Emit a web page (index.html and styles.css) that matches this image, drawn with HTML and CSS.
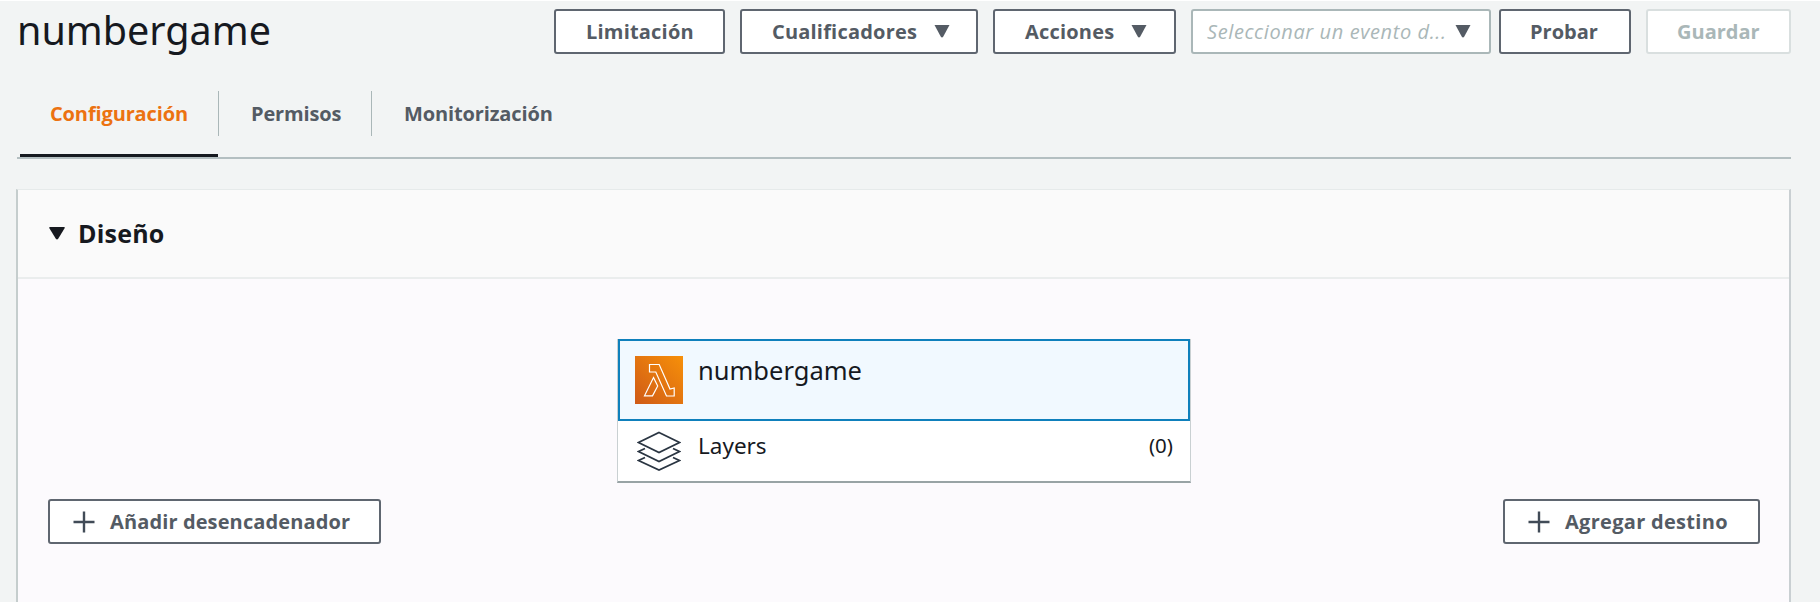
FILE: index.html
```
<!DOCTYPE html>
<html lang="es">
<head>
<meta charset="utf-8">
<title>numbergame</title>
<link rel="stylesheet" href="styles.css">
</head>
<body>
<div class="page">
  <header class="topbar">
    <h1 class="title">numbergame</h1>
    <div class="actions">
      <button class="btn throttle"><span>Limitación</span></button>
      <button class="btn qualifiers"><span>Cualificadores</span><svg class="caret" viewBox="0 0 16 13"><path d="M.5 0h15L9.300 11.500q-1.300 2-2.600 0z"/></svg></button>
      <button class="btn more"><span>Acciones</span><svg class="caret" viewBox="0 0 16 13"><path d="M.5 0h15L9.300 11.500q-1.300 2-2.600 0z"/></svg></button>
      <div class="select"><span class="placeholder">Seleccionar un evento d...</span><svg class="caret" viewBox="0 0 16 13"><path d="M.5 0h15L9.300 11.500q-1.300 2-2.600 0z"/></svg></div>
      <button class="btn test"><span>Probar</span></button>
      <button class="btn save"><span>Guardar</span></button>
    </div>
  </header>
  <nav class="tabs">
    <a class="tab active"><span>Configuración</span></a>
    <a class="tab second"><span>Permisos</span></a>
    <a class="tab last"><span>Monitorización</span></a>
  </nav>
  <section class="panel">
    <div class="panel-head">
      <svg class="toggle" viewBox="0 0 16 13"><path d="M1 0h14q1.200.2.600 1.300L9.200 11.700q-1.200 1.600-2.400 0L.4 1.300Q-.2.200 1 0z"/></svg>
      <h2 class="panel-title">Diseño</h2>
    </div>
    <div class="canvas">
      <button class="btn add trigger"><svg class="plus" viewBox="0 0 22 22"><path d="M11 .5v21M.5 11h21"/></svg><span>Añadir desencadenador</span></button>
      <div class="node">
        <div class="function">
          <svg class="lambda" viewBox="0 0 48 48">
            <defs><linearGradient id="orange" x1="0" y1="1" x2="1" y2="0"><stop offset="0" stop-color="#cf5a17"/><stop offset="1" stop-color="#f79009"/></linearGradient></defs>
            <path fill="url(#orange)" d="M0 0h48v48H0z"/>
            <path class="lambda-line" d="M14.500 8.500h9.700l10.800 24.500 4.200-1v8h-7.700L20.800 16h-6.300zM18.500 21.500l4.200 8.500-5.200 9.800H9.500z"/>
          </svg>
          <span class="function-name">numbergame</span>
        </div>
        <div class="layers">
          <svg class="stack" viewBox="0 0 44 40"><path d="M22 1.500 42.500 11.500 22 21.500 1.500 11.500zM8 17.500 1.500 20.500 22 30.500 42.500 20.500 36 17.500M8 26.500 1.500 29.500 22 39 42.500 29.500 36 26.500"/></svg>
          <span class="layers-name">Layers</span>
          <span class="count">(0)</span>
        </div>
      </div>
      <button class="btn add destination"><svg class="plus" viewBox="0 0 22 22"><path d="M11 .5v21M.5 11h21"/></svg><span>Agregar destino</span></button>
    </div>
  </section>
</div>
</body>
</html>
```
FILE: styles.css
```
* { box-sizing: border-box; }
body {
  margin: 0;
  background: #f2f4f4;
  font-family: "Noto Sans", "Open Sans", sans-serif;
  color: #16191f;
  overflow: hidden;
}
.page {
  height: 602px;
  padding: 0 29px 0 17px;
  border-top: 1px solid #fff;
  display: flex;
  flex-direction: column;
}
.topbar {
  display: flex;
  justify-content: space-between;
  align-items: flex-start;
  height: 90px;
  padding-top: 8px;
}
.title { margin: -7px 0 0; font-size: 39.5px; line-height: 56px; font-weight: 400; }
.actions { display: flex; }
.btn {
  height: 45px;
  padding: 0;
  display: flex;
  align-items: center;
  border: 2px solid #5f6670;
  border-radius: 3px;
  background: #fff;
  color: #545b64;
  font: 660 20px "Open Sans", sans-serif;
  white-space: nowrap;
}
.caret { width: 16px; height: 13px; fill: #545b64; flex: none; }
.throttle { width: 171px; padding-left: 30px; margin-right: 15px; letter-spacing: .2px; }
.qualifiers { width: 238px; padding-left: 30px; margin-right: 15px; letter-spacing: .2px; }
.more { width: 183px; padding-left: 30px; margin-right: 15px; letter-spacing: .2px; }
.qualifiers .caret, .more .caret { margin-left: 17px; }
.select {
  display: flex;
  align-items: center;
  justify-content: space-between;
  width: 300px;
  height: 45px;
  margin-right: 8px;
  padding: 0 18px 0 14px;
  border: 2px solid #aab7b8;
  border-radius: 3px;
  background: #fff;
}
.placeholder { font: italic 400 20px "Open Sans", sans-serif; color: #aab7b8; white-space: nowrap; letter-spacing: .6px; }
.test { width: 132px; padding-left: 29px; margin-right: 15px; }
.save { width: 145px; padding-left: 29px; border-color: #d9dfdf; color: #aab7b8; }
.tabs {
  display: flex;
  flex: none;
  height: 68px;
  border-bottom: 2px solid #b4bfc1;
  font: 660 20px/45px "Open Sans", sans-serif;
  letter-spacing: -.13px;
  color: #545b64;
}
.tab { height: 45px; border-right: 1px solid #aab7b8; white-space: nowrap; }
.active { position: relative; width: 202px; padding-left: 33px; color: #ec7211; }
.active::after { content: ""; position: absolute; left: 3px; right: 0; top: 63px; height: 3px; background: #16191f; }
.second { width: 153px; padding-left: 32px; }
.last { padding-left: 32px; border: 0; }
.panel {
  flex: 1;
  margin: 30px 0 0 -1px;
  border: 1px solid #e6eaea;
  border-width: 1px 2px 0;
  border-left-color: #c5cdcd;
  border-right-color: #c9cfd2;
  background: #fcfafd;
}
.panel-head {
  height: 89px;
  padding-left: 31px;
  display: flex;
  align-items: center;
  border-bottom: 2px solid #eaeded;
  background: #fafafa;
}
.toggle { width: 16px; height: 13px; fill: #16191f; }
.panel-title { margin: -2px 0 0 13px; font: 660 25px "Open Sans", sans-serif; letter-spacing: .2px; }
.canvas { display: flex; padding: 60px 29px 0 30px; align-items: flex-start; }
.node { width: 574px; margin-left: 236px; border: 1px solid #c9d0d2; border-top: 0; border-bottom: 2px solid #98a3a5; background: #fff; }
.function { display: flex; height: 82px; padding: 14px 15px; border: 2px solid #0f80bc; background: #f1f9ff; }
.lambda { width: 48px; height: 48px; margin-top: 1px; flex: none; }
.lambda-line { fill: none; stroke: #fff; stroke-width: 1.2; }
.function-name { margin: -2px 0 0 15px; font-size: 25.500px; line-height: 34px; }
.layers { display: flex; height: 60px; padding: 9px 17px 0 19px; }
.stack { width: 44px; height: 40px; margin-top: 1px; fill: none; stroke: #2a3542; stroke-width: 1.8; }
.layers-name { margin-left: 17px; font-size: 22.500px; line-height: 32px; }
.count { margin-left: auto; font-size: 20.500px; line-height: 30px; }
.add { margin-top: 160px; letter-spacing: .12px; }
.trigger { width: 333px; padding-left: 23px; }
.destination { width: 257px; margin-left: auto; padding-left: 23px; letter-spacing: .3px; }
.plus { width: 22px; height: 22px; margin-right: 15px; fill: none; stroke: #414b57; stroke-width: 2.4; }
```
